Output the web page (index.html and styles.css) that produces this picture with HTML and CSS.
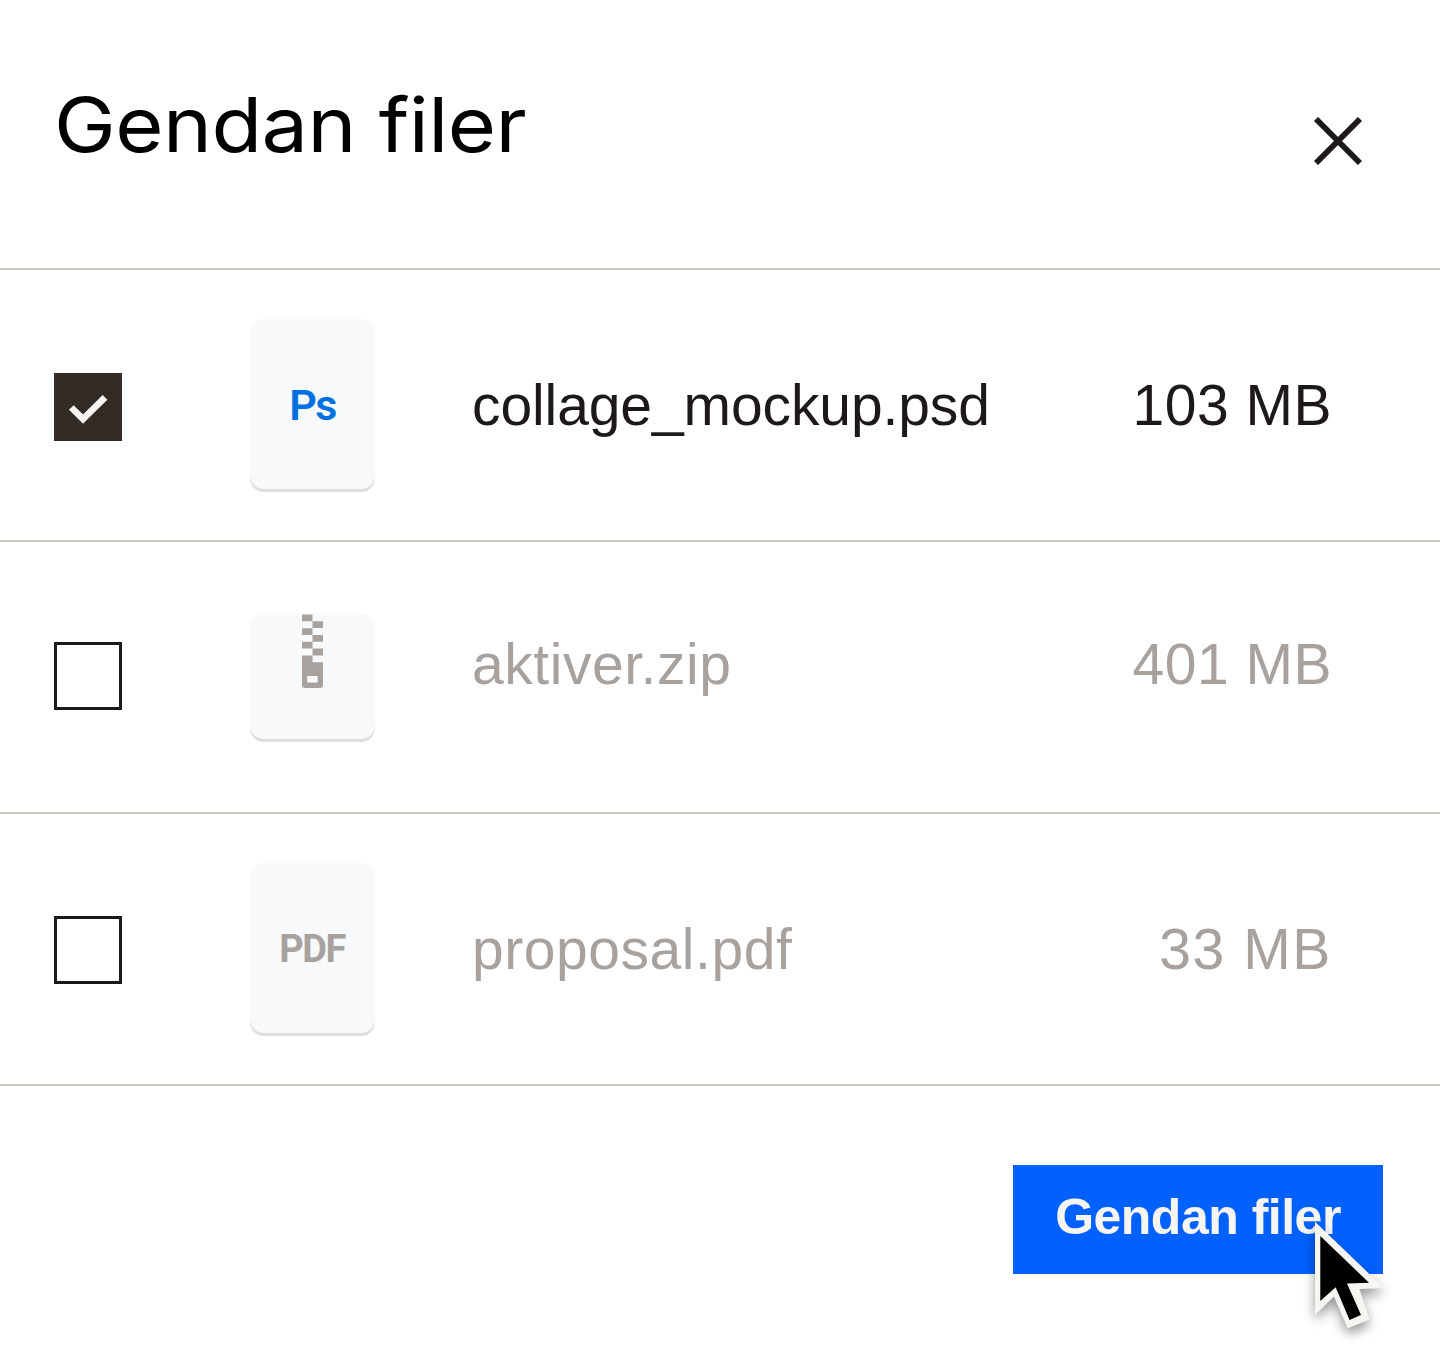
FILE: index.html
```html
<!DOCTYPE html>
<html lang="da">
<head>
    <meta charset="UTF-8">
    <meta name="viewport" content="width=device-width, initial-scale=1.0">
    <title>Gendan filer</title>
    <link rel="stylesheet" href="styles.css">
</head>
<body>

    <div class="dialog">
        <header class="dialog-header">
            <h1>Gendan filer</h1>
            <button class="close-button" type="button" aria-label="Luk">
                <svg width="48" height="48" viewBox="0 0 48 48" fill="none" stroke="#1e1919" stroke-width="5.8">
                    <path d="M2 2L46 46M46 2L2 46"/>
                </svg>
            </button>
        </header>

        <ul class="file-list">
            <li class="file-row selected">
                <span class="checkbox checked">
                    <svg width="68" height="68" viewBox="0 0 68 68" fill="none" stroke="#f7f5f2" stroke-width="6.6">
                        <path d="M17.3 34.5L29 46.2L51 24.4"/>
                    </svg>
                </span>
                <span class="file-icon ps">Ps</span>
                <span class="file-name">collage_mockup.psd</span>
                <span class="file-size">103 MB</span>
            </li>

            <li class="file-row row-zip">
                <span class="checkbox"></span>
                <span class="file-icon zip">
                    <svg width="21" height="74" viewBox="0 0 21 74" fill="#a8a29f">
                        <path d="M0 .5h10.5v6.8H0zM10.5 7.3H21v6.8H10.5zM0 14.2h10.5V21H0zM10.5 21H21v6.8H10.5zM0 27.8h10.5v6.8H0zM10.5 34.6H21v6.8H10.5z"/>
                        <path d="M0 41.4h10.5v6.8H21V71q0 3-3 3H3q-3 0-3-3zM5.2 62v6.6h10.4V62z" fill-rule="evenodd"/>
                    </svg>
                </span>
                <span class="file-name">aktiver.zip</span>
                <span class="file-size">401 MB</span>
            </li>

            <li class="file-row row-pdf">
                <span class="checkbox"></span>
                <span class="file-icon pdf">PDF</span>
                <span class="file-name">proposal.pdf</span>
                <span class="file-size">33 MB</span>
            </li>
        </ul>

        <footer class="dialog-footer">
            <button class="restore-button" type="button">Gendan filer</button>
            <!-- Mouse pointer over the button -->
            <svg class="cursor" width="90" height="130" viewBox="0 0 90 130">
                <path fill="#f7f5f2" d="M15 11.7L84 78L59.5 79L69.5 109.5L47.7 118.3L34 86.5L15 105z"/>
                <path fill="#000" d="M20.3 26L69 72.7L47 73.5L61 105L49.5 110L35.7 77.3L20.3 91z"/>
            </svg>
        </footer>
    </div>

</body>
</html>
```
FILE: styles.css
```css
* { box-sizing: border-box; }

body {
    margin: 0;
    background: #fff;
    color: #1e1919;
    font-family: "Liberation Sans", Arial, sans-serif;
}

button { border: 0; padding: 0; background: none; font-family: inherit; }

.dialog { height: 1358px; overflow: hidden; }

/* --- Header --- */
.dialog-header {
    display: flex;
    justify-content: space-between;
    align-items: flex-start;
    height: 270px;
    padding: 76px 78px 0 54px;
    border-bottom: 2px solid #cdc9bf;
}
.dialog-header h1 {
    margin: 0;
    color: #000;
    font-family: Inter, sans-serif;
    font-size: 76px;
    line-height: 96px;
    font-weight: 400;
    letter-spacing: -0.5px;
    white-space: nowrap;
    /* wide display face */
    transform: scaleX(1.09);
    transform-origin: left;
}
.close-button { height: 48px; margin-top: 41px; }
.close-button svg { display: block; }

/* --- File rows --- */
.file-list { margin: 0; padding: 0; list-style: none; }
.file-row {
    display: grid;
    grid-template-columns: 196px 222px 1fr auto;
    align-items: center;
    height: 272px;
    padding: 0 108px 0 54px;
    border-bottom: 2px solid #cdc9bf;
    color: #a8a29f;
    font-size: 57px;
    line-height: 68px;
}
.file-row.selected { color: #1e1919; }

.checkbox { width: 68px; height: 68px; border: 3px solid #1e1919; }
.checkbox.checked { border: 0; background: #332b26; margin-top: 4px; }
.row-zip .checkbox { margin-top: -2px; }
.row-pdf .checkbox { margin-top: 1px; }
.checkbox svg { display: block; }

.file-icon {
    display: flex;
    align-items: center;
    justify-content: center;
    width: 125px;
    height: 173px;
    border-radius: 14px;
    background: #f7f9fb;
    box-shadow: inset 0 -3px 0 #dcdfe2;
    font-family: Roboto, sans-serif;
    font-weight: 700;
}
.file-icon.ps { color: #0070e0; font-size: 43px; font-weight: 600; letter-spacing: -1.5px; }
.file-icon.zip { height: 129px; align-items: flex-start; padding-top: 1px; }
.file-icon.pdf { padding-right: 1px; font-size: 38px; letter-spacing: -1.5px; }

.file-name, .file-size { white-space: nowrap; }
.file-name { letter-spacing: 0.55px; }
.file-size { letter-spacing: 0.5px; }
.selected .file-name { letter-spacing: -0.1px; }
.row-zip .file-name, .row-zip .file-size { margin-top: -26px; }
.row-pdf .file-size { letter-spacing: 1.6px; }

/* --- Footer --- */
.dialog-footer {
    position: relative;
    display: flex;
    justify-content: flex-end;
    padding: 79px 57px 0 0;
}
.restore-button {
    width: 370px;
    height: 109px;
    padding-bottom: 6px;
    background: #0061fe;
    color: #f7f5f2;
    font-size: 50px;
    font-weight: 700;
    letter-spacing: -0.5px;
    white-space: nowrap;
}
.cursor {
    position: absolute;
    top: 124px;
    left: 1300px;
    overflow: visible;
    filter: drop-shadow(0 6px 6px rgba(0, 0, 0, 0.4));
}
```
